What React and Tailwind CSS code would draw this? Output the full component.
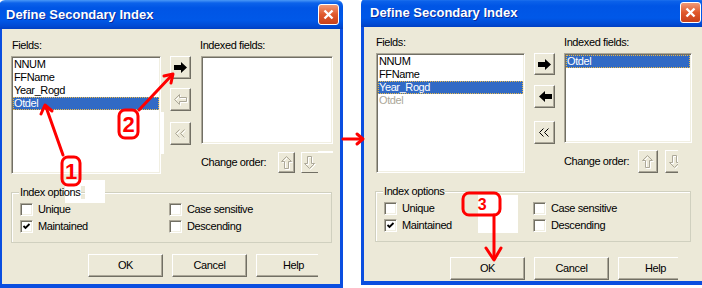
import React from "react";

const sunken =
  "border border-t-[#aca899] border-l-[#aca899] border-r-white border-b-white shadow-[inset_1px_1px_0_#716f64,inset_-1px_-1px_0_#f1efe2]";
const raised =
  "border border-t-white border-l-white border-r-[#716f64] border-b-[#716f64] shadow-[inset_-1px_-1px_0_#aca899] bg-[#ece9d8]";

// --- glyphs ---
const ArrowRight = () => (
  <svg width="14" height="11" viewBox="0 0 14 11">
    <polygon points="0,3 7,3 7,0 13,5.5 7,11 7,8 0,8" fill="#000" />
  </svg>
);

const ArrowLeft = () => (
  <svg width="14" height="11" viewBox="0 0 14 11">
    <polygon points="14,3 7,3 7,0 1,5.5 7,11 7,8 14,8" fill="#000" />
  </svg>
);

const Emboss = ({ w, h, points }) => (
  <svg width={w} height={h} viewBox={`0 0 ${w} ${h}`}>
    <polygon points={points} transform="translate(1,1)" fill="none" stroke="#fff" />
    <polygon points={points} fill="none" stroke="#aca899" />
  </svg>
);

const Chevrons = ({ disabled }) => (
  <svg width="12" height="10" viewBox="0 0 12 10">
    {disabled && (
      <g transform="translate(1,1)" stroke="#fff" fill="none">
        <polyline points="4.5,0.5 0.5,4.5 4.5,8.5" />
        <polyline points="9.5,0.5 5.5,4.5 9.5,8.5" />
      </g>
    )}
    <g stroke={disabled ? "#aca899" : "#000"} fill="none">
      <polyline points="4.5,0.5 0.5,4.5 4.5,8.5" />
      <polyline points="9.5,0.5 5.5,4.5 9.5,8.5" />
    </g>
  </svg>
);

const LEFT_OUTLINE = "0.5,5.5 5.5,0.5 5.5,3.5 12.5,3.5 12.5,7.5 5.5,7.5 5.5,10.5";
const UP_OUTLINE = "5.5,0.5 10.5,5.5 7.5,5.5 7.5,12.5 3.5,12.5 3.5,5.5 0.5,5.5";
const DOWN_OUTLINE = "5.5,12.5 10.5,7.5 7.5,7.5 7.5,0.5 3.5,0.5 3.5,7.5 0.5,7.5";

// --- parts ---
const Btn = ({ className, children }) => (
  <div className={`${raised} flex items-center justify-center shrink-0 ${className}`}>{children}</div>
);

const TitleBar = ({ pad }) => (
  <div
    className={`h-[29px] flex items-center justify-between ${pad} rounded-t-[6px] bg-[linear-gradient(to_bottom,#4a98f7_0px,#0c62ea_3px,#0055e5_8px,#0058e8_20px,#004ad4_26px,#003fc2_29px)]`}
  >
    <span className="text-white font-bold text-[13px] leading-none tracking-normal [text-shadow:1px_1px_0_#0a2a9a]">
      Define Secondary Index
    </span>
    <div className="w-[21px] h-[21px] rounded-[3px] border border-white bg-[linear-gradient(to_bottom,#f09a78,#e0592c_50%,#c8401a)] flex items-center justify-center">
      <svg width="11" height="11" viewBox="0 0 11 11">
        <path d="M1.5 1.5 L9.5 9.5 M9.5 1.5 L1.5 9.5" stroke="#fff" strokeWidth="2.4" />
      </svg>
    </div>
  </div>
);

const ListBox = ({ className, items }) => (
  <div className={`${sunken} bg-white p-[1px] shrink-0 ${className}`}>
    {items.map((it) => (
      <div
        key={it.t}
        className={`h-[13px] leading-[13px] pl-[1px] whitespace-nowrap ${
          it.sel
            ? "bg-[#316ac5] text-white outline-1 outline-dotted outline-[#e8b84a] outline-offset-[-1px]"
            : it.dim
            ? "text-[#aca899]"
            : ""
        }`}
      >
        {it.t}
      </div>
    ))}
  </div>
);

const Check = ({ on, label }) => (
  <div className="flex items-center h-[13px]">
    <div className={`${sunken} bg-white w-[13px] h-[13px] shrink-0 flex items-center justify-center`}>
      {on && (
        <svg width="9" height="9" viewBox="0 0 9 9">
          <path d="M1.5 4 L3.5 6 L7.5 2" stroke="#000" strokeWidth="1.8" fill="none" />
        </svg>
      )}
    </div>
    <span className="ml-[5px] leading-[13px]">{label}</span>
  </div>
);

const Options = ({ className, labelBg }) => (
  <div className={`relative border border-[#d0d0bf] shadow-[inset_1px_1px_0_#fff] ${className}`}>
    <span className={`absolute left-[7px] top-[-7px] px-[1px] leading-[13px] ${labelBg}`}>Index options</span>
    <div className="pt-[10px] pl-[8px] grid grid-cols-[149px_1fr] gap-y-[4px]">
      <Check label="Unique" />
      <Check label="Case sensitive" />
      <Check on label="Maintained" />
      <Check label="Descending" />
    </div>
  </div>
);

const Body = ({ children, className }) => (
  <div className={`bg-[#ece9d8] border-x-[3px] border-b-[4px] border-[#0a4ee0] ${className}`}>{children}</div>
);

// --- dialogs ---
const LeftDialog = () => (
  <div className="ml-[-1px] w-[344px] shrink-0 flex flex-col">
    <TitleBar pad="pl-[7px] pr-[4px]" />
    <Body className="pt-[10px] pl-[9px] pb-[7px]">
      <div className="flex h-[13px] leading-[13px]">
        <span className="w-[189px] pl-[1px]">Fields:</span>
        <span>Indexed fields:</span>
      </div>
      <div className="flex items-start mt-[4px]">
        <ListBox
          className="w-[150px] h-[118px]"
          items={[{ t: "NNUM" }, { t: "FFName" }, { t: "Year_Rogd" }, { t: "Otdel", sel: true }]}
        />
        <div className="ml-[9px] flex flex-col">
          <Btn className="w-[21px] h-[23px]">
            <ArrowRight />
          </Btn>
          <Btn className="w-[21px] h-[23px] mt-[9px]">
            <Emboss w={14} h={12} points={LEFT_OUTLINE} />
          </Btn>
          <Btn className="w-[21px] h-[23px] mt-[11px]">
            <Chevrons disabled />
          </Btn>
        </div>
        <div className="ml-[10px] flex flex-col">
          <ListBox className="w-[132px] h-[88px]" items={[]} />
          <div className="mt-[8px] h-[21px] flex items-center">
            <span className="w-[77px] shrink-0 whitespace-nowrap">Change order:</span>
            <Btn className="w-[17px] h-[21px]">
              <Emboss w={12} h={14} points={UP_OUTLINE} />
            </Btn>
            <Btn className="w-[17px] h-[21px] ml-[6px] border-r-0 shadow-none">
              <Emboss w={12} h={14} points={DOWN_OUTLINE} />
            </Btn>
          </div>
        </div>
      </div>
      <Options
        className="mt-[18px] w-[321px] h-[51px]"
        labelBg="bg-[linear-gradient(to_right,#ece9d8_46px,#fff_46px)]"
      />
      <div className="flex mt-[11px] ml-[77px] h-[23px]">
        <Btn className="w-[75px] h-[23px]">OK</Btn>
        <Btn className="w-[75px] h-[23px] ml-[9px]">Cancel</Btn>
        <div className="w-[62px] h-[23px] ml-[9px] overflow-hidden shrink-0">
          <Btn className="w-[75px] h-[23px]">Help</Btn>
        </div>
      </div>
    </Body>
  </div>
);

const RightDialog = () => (
  <div className="ml-[18px] mt-[-2px] w-[344px] shrink-0 flex flex-col">
    <TitleBar pad="pl-[9px] pr-[4px]" />
    <Body className="pt-[9px] pl-[12px] pb-[1px]">
      <div className="flex h-[13px] leading-[13px]">
        <span className="w-[188px]">Fields:</span>
        <span>Indexed fields:</span>
      </div>
      <div className="flex items-start mt-[4px]">
        <ListBox
          className="w-[149px] h-[120px]"
          items={[{ t: "NNUM" }, { t: "FFName" }, { t: "Year_Rogd", sel: true }, { t: "Otdel", dim: true }]}
        />
        <div className="ml-[9px] flex flex-col">
          <Btn className="w-[21px] h-[22px]">
            <ArrowRight />
          </Btn>
          <Btn className="w-[21px] h-[23px] mt-[10px]">
            <ArrowLeft />
          </Btn>
          <Btn className="w-[21px] h-[23px] mt-[13px]">
            <Chevrons />
          </Btn>
        </div>
        <div className="ml-[9px] flex flex-col">
          <ListBox className="w-[128px] h-[90px]" items={[{ t: "Otdel", sel: true }]} />
          <div className="mt-[7px] h-[23px] flex items-center">
            <span className="w-[74px] shrink-0 whitespace-nowrap">Change order:</span>
            <Btn className="w-[20px] h-[23px]">
              <Emboss w={12} h={14} points={UP_OUTLINE} />
            </Btn>
            <div className="w-[13px] h-[23px] ml-[7px] overflow-hidden shrink-0">
              <Btn className="w-[20px] h-[23px]">
                <Emboss w={12} h={14} points={DOWN_OUTLINE} />
              </Btn>
            </div>
          </div>
        </div>
      </div>
      <Options className="mt-[18px] ml-[-1px] w-[316px] h-[51px]" labelBg="bg-[#ece9d8]" />
      <div className="flex mt-[15px] ml-[74px] h-[23px]">
        <Btn className="w-[75px] h-[23px]">OK</Btn>
        <Btn className="w-[75px] h-[23px] ml-[9px]">Cancel</Btn>
        <div className="w-[60px] h-[23px] ml-[9px] overflow-hidden shrink-0">
          <Btn className="w-[75px] h-[23px]">Help</Btn>
        </div>
      </div>
    </Body>
  </div>
);

// red call-outs drawn over the screenshots
const Annotations = () => (
  <svg className="absolute left-0 top-0 pointer-events-none" width="702" height="288" viewBox="0 0 702 288">
    <g fill="#fff">
      <rect x="65" y="180" width="20" height="6" />
      <rect x="65" y="199" width="20" height="4" />
      <rect x="85" y="180" width="20" height="23" />
      <rect x="160" y="112" width="4" height="42" />
      <rect x="318" y="151" width="15" height="2" />
      <rect x="478" y="195" width="40" height="38" />
    </g>
    <g stroke="#ff0000" strokeWidth="3" fill="none" strokeLinecap="round" strokeLinejoin="round">
      <rect x="62" y="157" width="18" height="28" rx="6" />
      <line x1="63" y1="155" x2="46" y2="107" />
      <polyline points="41,114 45,105 52,111" />

      <rect x="119" y="110" width="19" height="28" rx="6" />
      <line x1="139" y1="110" x2="172" y2="75" />
      <polyline points="164,76 173,74 171,83" />

      <line x1="343" y1="139" x2="362" y2="139" />
      <polyline points="357,134 363,139 357,144" />

      <rect x="463" y="193" width="37" height="22" rx="6" />
      <line x1="494" y1="215" x2="494" y2="259" />
      <polyline points="486,248 494,260 501,248" />
    </g>
    <g fill="#ff0000" fontFamily="Liberation Sans, Arial, sans-serif" fontWeight="bold" textAnchor="middle">
      <text x="71" y="179" fontSize="22">1</text>
      <text x="128.5" y="132" fontSize="22">2</text>
      <text x="482" y="210" fontSize="16">3</text>
    </g>
  </svg>
);

export default function App() {
  return (
    <div className="relative w-[702px] h-[288px] overflow-hidden bg-white font-['Liberation_Sans',Arial,sans-serif] text-[11px] tracking-[-0.4px] text-black">
      <div className="flex items-start">
        <LeftDialog />
        <RightDialog />
      </div>
      <Annotations />
    </div>
  );
}
